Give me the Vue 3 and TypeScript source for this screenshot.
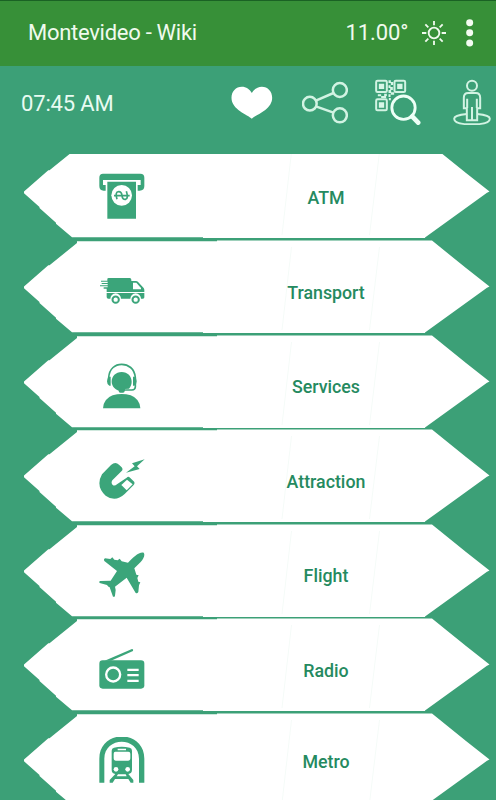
<script setup lang="ts">
interface Category {
  id: string
  label: string
  viewBox: string
}

const categories: Category[] = [
  { id: 'atm', label: 'ATM', viewBox: '56 40 138 138' },
  { id: 'transport', label: 'Transport', viewBox: '56 24 138 138' },
  { id: 'services', label: 'Services', viewBox: '56 38 138 138' },
  { id: 'attraction', label: 'Attraction', viewBox: '56 37 138 138' },
  { id: 'flight', label: 'Flight', viewBox: '56 35 138 138' },
  { id: 'radio', label: 'Radio', viewBox: '56 34 138 138' },
  { id: 'metro', label: 'Metro', viewBox: '56 36 138 138' },
]
</script>

<template>
  <div class="screen">
    <header class="appbar">
      <h1 class="title">Montevideo - Wiki</h1>
      <span class="temp">11.00°</span>
      <svg class="sun" viewBox="606 57 72 72">
        <circle cx="642" cy="93" r="16" />
        <path d="M642 57v13M642 116v13M606 93h13M665 93h13M616 67l9 9M659 110l9 9M668 67l-9 9M625 110l-9 9" />
      </svg>
      <svg class="more" viewBox="737 51 22 84">
        <circle cx="748" cy="62" r="10.500" />
        <circle cx="748" cy="92.500" r="10.500" />
        <circle cx="748" cy="123" r="10.500" />
      </svg>
    </header>

    <nav class="tools">
      <span class="clock">07:45 AM</span>
      <svg class="tool" viewBox="25.500 238 138 138">
        <path class="solid" d="M94 357C82 345 33 330 33 294C33 275 46 261 64 261C77 261 88 269 94 280C100 269 111 261 124 261C142 261 155 275 155 294C155 330 106 345 94 357Z" />
      </svg>
      <svg class="tool" viewBox="245.500 238 138 138">
        <g class="line">
          <circle cx="269" cy="312" r="20.500" />
          <circle cx="359" cy="271" r="21" />
          <circle cx="359" cy="347" r="21" />
          <path d="M287 303l53-23M287 320l53 19" />
        </g>
      </svg>
      <svg class="tool" viewBox="465.500 238 138 138">
        <g class="line qr">
          <rect x="469" y="243" width="32" height="34" rx="4" />
          <rect x="524" y="243" width="32" height="34" rx="4" />
          <rect x="469" y="299" width="32" height="33" rx="4" />
        </g>
        <g class="solid">
          <path d="M477 252h16v16h-16zM532 252h16v16h-16zM477 308h16v16h-16z" />
          <path d="M506 242h7v8h-7zM513 247h7v9h-7zM506 257h6v8h-6zM511 262h8v9h-8zM506 271h8v9h-8zM474 284h10v6h-10zM484 289h15v6h-15zM493 282h8v7h-8zM506 284h6v8h-6zM513 278h10v7h-10zM507 295h6v7h-6z" />
        </g>
        <circle class="lens" cx="551" cy="324" r="35" />
        <path class="handle" d="M577 350l18 19" />
      </svg>
      <svg class="tool" viewBox="685.500 238 138 138">
        <g class="line thin">
          <circle cx="754.500" cy="258" r="15" />
          <path d="M739 362V326H730V294Q730 280 743 280H766Q779 280 779 294V326H770V362Z" />
          <path d="M740 325V297M769 325V297M754.500 322V362" />
          <path d="M739 343C714 345 701 351 701 357C701 368 722 374 754 374C787 374 808 368 808 357C808 351 795 345 770 343" />
        </g>
      </svg>
    </nav>

    <main class="list">
      <button v-for="c in categories" :key="c.id" type="button" class="row" :class="c.id">
        <svg class="banner" viewBox="0 0 496 94.600" preserveAspectRatio="none">
          <path
            class="plate"
            d="M24 48.500L48.300 27.300H49.500L77 5V3.300H217V2.600H432L466 30L489.500 48.500L487 49.800L425 94.600V95H203V94.200H72L56 80.700V79.700L39.500 65V64L24 50.300Z"
          />
          <path class="crease" d="M291.500 9L282 92M379.500 9L369.500 92" />
        </svg>
        <svg class="icon" :viewBox="c.viewBox">
          <template v-if="c.id === 'atm'">
            <path d="M68 42H180Q192 42 192 54V79Q192 93 178 93H172V76H181V61H68V76H76V93H70Q57 93 57 79V54Q57 42 68 42Z" />
            <path d="M81 66H167V177H81Z" />
            <circle class="white" cx="124" cy="107" r="31" />
            <path class="stroke s5" d="M101 108H148M110 119Q103 96 115 96Q124 96 125 108Q126 120 136 119Q145 116 138 95" />
          </template>
          <template v-else-if="c.id === 'transport'">
            <path d="M81 57Q81 54 85 54H148Q153 54 153 59V63H166Q171 63 174 67L190 84Q192 87 192 91V96H79V86H70V82H82V79H59V76H82V72H64V69H82V65H62V62H81Z" />
            <path d="M79 99H192V112Q192 116 188 116H182A16 16 0 0 0 150 116H122A16 16 0 0 0 90 116H84Q79 116 79 111Z" />
            <path class="white" d="M158 68H168L182 84V88H158Z" />
            <circle class="stroke s6" cx="106" cy="119" r="9.500" />
            <circle class="stroke s6" cx="166" cy="119" r="9.500" />
          </template>
          <template v-else-if="c.id === 'services'">
            <path d="M68 174Q70 145 97 135Q124 127 151 135Q178 145 180 174Z" />
            <path d="M124 65C142 65 154 78 154 94C154 102 151 109 146 115L134 116V121H115C103 116 94 106 94 94C94 78 106 65 124 65Z" />
            <path class="stroke s5" d="M85 88V82C87 54 105 42 124 42S163 54 165 82V110Q164 119 155 119H130" />
            <path d="M87 79H91V106H87Q80 103 80 93Q80 83 87 79ZM158 79H162Q169 83 169 93Q169 103 162 106H158Z" />
            <rect x="115" y="117" width="18" height="10" rx="5" />
          </template>
          <template v-else-if="c.id === 'attraction'">
            <path d="M92 61Q105 50 116 60L124 68Q129 74 124 79L96 107Q91 115 97 121Q103 125 110 119L139 99Q144 94 149 99L160 110Q165 115 160 121L133 148Q105 174 76 153Q45 124 65 89Z" />
            <path class="white" d="M140 105L157 119L139 137L123 121Z" />
            <path d="M193 44L155 56L163 65L137 84L178 73L170 65Z" />
          </template>
          <template v-else-if="c.id === 'flight'">
            <path d="M190 37C195 43 190 55 181 65L162 84L168 103L175 105L171 113L174 124L180 126L176 135L174 155Q171 160 166 158L139 112L104 139L106 149L104 166Q103 171 98 169L88 141Q83 139 80 134L58 128Q55 123 60 122L91 121L110 92L72 62Q69 57 74 54L90 56L96 51L102 58L112 60L118 55L124 63L143 67C157 53 175 34 190 37Z" />
          </template>
          <template v-else-if="c.id === 'radio'">
            <path d="M67 77H182Q192 77 192 87V152Q192 162 182 162H67Q57 162 57 152V87Q57 77 67 77Z" />
            <path d="M73 78L155 43Q160 43 158 49L92 78Z" />
            <circle class="ring" cx="98.500" cy="119.500" r="21" />
            <path class="white" d="M141 102H175V109H141ZM141 118H175V125H141ZM141 135H175V142H141Z" />
          </template>
          <template v-else>
            <path d="M57 173V101C57 12 192 12 192 101V173H176V101C176 33 72 33 72 101V173Z" />
            <path d="M101 68Q124 62 148 68Q155 70 155 77V134Q155 145 144 147L159 165V173H151L144 162H104L97 173H88V165L105 147Q94 145 94 134V77Q94 70 101 68Z" />
            <path class="white" d="M112 71H137V76H112ZM105 80H144Q150 80 150 86V99Q150 107 143 107H107Q100 107 100 99V86Q100 80 105 80ZM110 152L113 148H136L139 154H109Z" />
            <circle class="white" cx="107" cy="133" r="7" />
            <circle class="white" cx="142" cy="133" r="7" />
          </template>
        </svg>
        <span class="label">{{ c.label }}</span>
      </button>
    </main>
  </div>
</template>

<style>
body {
  margin: 0;
}
</style>

<style scoped>
.screen {
  display: flex;
  flex-direction: column;
  width: 496px;
  height: 800px;
  overflow: hidden;
  background: #3ca077;
  font-family: Roboto, "Liberation Sans", sans-serif;
}

.appbar {
  display: flex;
  flex: none;
  align-items: center;
  box-sizing: border-box;
  height: 66px;
  padding: 0 22.500px 2px 28px;
  border-top: 1px solid #1a6224;
  background: #379038;
  color: #f0faee;
}

.title {
  flex: 1;
  margin: 0;
  font-size: 22px;
  font-weight: 400;
  letter-spacing: -0.280px;
}

.temp {
  font-size: 22px;
  letter-spacing: -0.100px;
}

.sun {
  width: 24px;
  height: 24px;
  margin: 0 19.700px 0 14px;
  fill: none;
  stroke: #f0faee;
  stroke-width: 5.500;
}

.more {
  width: 7.333px;
  height: 28px;
  fill: #f4fcf2;
}

.tools {
  display: flex;
  flex: none;
  align-items: flex-start;
  gap: 27.333px;
  box-sizing: border-box;
  height: 87.700px;
  padding: 13.300px 1.500px 0 21px;
}

.clock {
  flex: 1;
  color: #e9fbf2;
  font-size: 22px;
  letter-spacing: -0.150px;
  line-height: 50px;
}

.tool {
  flex: none;
  width: 46px;
  height: 46px;
}

.solid {
  fill: #fff;
}

.tool g.solid {
  fill: #d7f6e7;
}

.line {
  fill: none;
  stroke: #d2f3e3;
  stroke-width: 7.500;
}

.qr {
  stroke-width: 6;
}

.thin {
  stroke-width: 6;
}

.lens {
  fill: none;
  stroke: #edfff6;
  stroke-width: 8.500;
}

.handle {
  fill: none;
  stroke: #edfff6;
  stroke-width: 14;
  stroke-linecap: round;
}

.list {
  flex: 1;
  min-height: 0;
  overflow: hidden;
}

.row {
  position: relative;
  display: flex;
  align-items: center;
  box-sizing: border-box;
  width: 496px;
  height: 94.600px;
  padding: 11.400px 70px 0 98.667px;
  border: 0;
  background: none;
  font-family: inherit;
}

.atm {
  margin-top: -10.300px;
}

.metro {
  padding-top: 3.400px;
}

.banner {
  position: absolute;
  top: 0;
  left: 0;
  width: 496px;
  height: 94.600px;
  overflow: visible;
}

.plate {
  fill: #fff;
}

.crease {
  fill: none;
  stroke: #f5fbf8;
  stroke-width: 1;
}

.icon {
  position: relative;
  flex: none;
  width: 46px;
  height: 46px;
  fill: #3ba57a;
}

.white {
  fill: #fff;
}

.stroke {
  fill: none;
  stroke: #3ba57a;
}

.s5 {
  stroke-width: 5;
}

.s6 {
  stroke-width: 6;
}

.ring {
  fill: none;
  stroke: #fff;
  stroke-width: 7;
}

.label {
  position: relative;
  flex: 1;
  padding: 2.400px 0 0 81.333px;
  color: #258a60;
  font-size: 17.800px;
  font-weight: 500;
  text-align: center;
}
</style>
